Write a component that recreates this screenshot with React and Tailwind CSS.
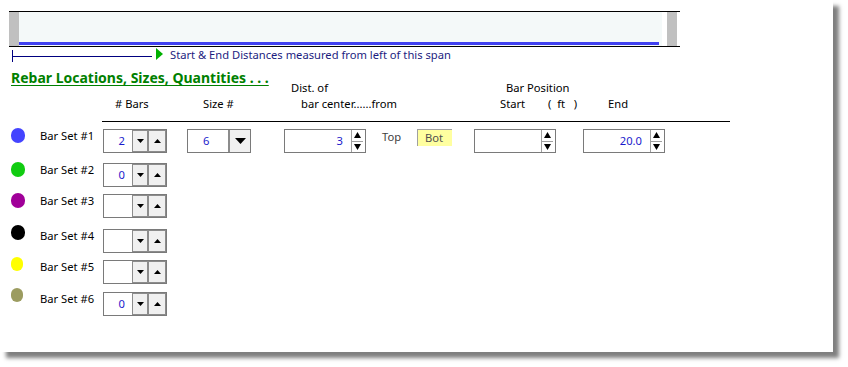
import React from "react";

function Tri({ dir = "down", w = 7, h = 4 }) {
  const pts = dir === "down" ? `0,0 ${w},0 ${w / 2},${h}` : `0,${h} ${w},${h} ${w / 2},0`;
  return (
    <svg width={w} height={h} viewBox={`0 0 ${w} ${h}`} className="block">
      <polygon points={pts} fill="#000" />
    </svg>
  );
}

function SpinH({ value }) {
  return (
    <div className="flex h-[24px] w-[64px] border border-[#7a7a7a] bg-white">
      <div className="flex-1 flex items-center justify-end pr-[7px] text-[#1a1acc]">{value}</div>
      <div className="w-[16px] border border-[#8c8c8c] bg-[#f0f0f0] flex items-center justify-center">
        <Tri dir="down" />
      </div>
      <div className="w-[18px] border border-[#8c8c8c] bg-[#f0f0f0] flex items-center justify-center">
        <Tri dir="up" />
      </div>
    </div>
  );
}

function SpinV({ value }) {
  return (
    <div className="flex h-[24px] w-[82px] border border-[#7a7a7a] bg-white">
      <div className="flex-1 flex items-center justify-end pr-[8px] text-[#1a1acc]">{value}</div>
      <div className="w-[12px] mr-[2px] flex flex-col border-l border-[#a0a0a0]">
        <div className="flex-1 flex items-center justify-center border-b border-[#a0a0a0]">
          <Tri dir="up" w={7} h={6} />
        </div>
        <div className="flex-1 flex items-center justify-center">
          <Tri dir="down" w={7} h={6} />
        </div>
      </div>
    </div>
  );
}

function SizeSelect({ value }) {
  return (
    <div className="flex h-[24px] w-[64px] border border-[#7a7a7a] bg-white">
      <div className="flex-1 flex items-center pl-[15px] text-[#1a1acc]">{value}</div>
      <div className="w-[22px] border-l-2 border-[#8c8c8c] bg-[#f0f0f0] flex items-center justify-center">
        <Tri dir="down" w={11} h={6} />
      </div>
    </div>
  );
}

const rows = [
  { n: 1, color: "bg-[#4444ff]", val: "2", mt: "mt-[7px]", cmt: "-mt-[1px]", csize: "w-[14px] h-[15px]", full: true },
  { n: 2, color: "bg-[#11cc11]", val: "0", mt: "mt-[10px]", cmt: "-mt-[1px]", csize: "w-[14px] h-[15px]" },
  { n: 3, color: "bg-[#a00099]", val: "", mt: "mt-[7px]", cmt: "-mt-[1px]", csize: "w-[14px] h-[15px]" },
  { n: 4, color: "bg-[#000000]", val: "", mt: "mt-[11px]", cmt: "-mt-[4px]", csize: "w-[14px] h-[15px]" },
  { n: 5, color: "bg-[#ffff00]", val: "", mt: "mt-[7px]", cmt: "-mt-[3px]", csize: "w-[12px] h-[14px]" },
  { n: 6, color: "bg-[#9c9c60]", val: "0", mt: "mt-[8px]", cmt: "-mt-[4px]", csize: "w-[12px] h-[14px]" },
];

export default function App() {
  return (
    <div className="w-[848px] h-[367px] bg-white font-['Noto_Sans',sans-serif] text-[11.2px] leading-[16px] text-black">
      <div className="w-[833px] h-[352px] bg-white shadow-[6px_6px_4px_rgba(0,0,0,0.5)] overflow-hidden">
        {/* top span panel */}
        <div className="pt-[11px] pl-[9px]">
          <div className="w-[671px] h-[36px] border-y border-black flex">
            <div className="w-[10px] bg-[#c0c0c0]" />
            <div className="w-[643px] bg-[#f4f9f9] flex flex-col justify-end">
              <div className="w-[640px] h-[3px] bg-[#4040f0] mb-px" />
            </div>
            <div className="w-[5px]" />
            <div className="w-[10px] bg-[#c0c0c0]" />
          </div>
        </div>

        {/* distance bracket */}
        <div className="mt-px h-[14px] flex items-start">
          <div className="ml-[12px] mt-[2px] w-px h-[12px] bg-[#000080]" />
          <div className="mt-[8px] w-[139px] h-px bg-[#000080]" />
          <div className="ml-[4px] w-0 h-0 border-l-[7px] border-l-[#00b000] border-y-[6px] border-y-transparent" />
          <div className="ml-[7px] -mt-[1px] text-[#1c1c80] whitespace-nowrap">
            Start &amp; End Distances measured from left of this span
          </div>
        </div>

        {/* title + header line 1 */}
        <div className="mt-[7px] flex items-start">
          <div className="ml-[11px] w-[280px]">
            <span className="text-[14px] leading-[18px] font-bold text-[#008000] underline underline-offset-[2px] whitespace-nowrap">
              Rebar Locations, Sizes, Quantities . . .
            </span>
          </div>
          <div className="mt-[11px] w-[215px] whitespace-nowrap">Dist. of</div>
          <div className="mt-[11px] whitespace-nowrap">Bar Position</div>
        </div>

        {/* header line 2 */}
        <div className="flex whitespace-nowrap">
          <div className="ml-[115px] w-[88px]"># Bars</div>
          <div className="w-[98px]">Size #</div>
          <div className="w-[199px]">bar center......from</div>
          <div className="w-[48px]">Start</div>
          <div className="w-[60px]">(&nbsp;&nbsp;ft&nbsp;&nbsp;&nbsp;)</div>
          <div>End</div>
        </div>

        <div className="mt-[9px] ml-[102px] w-[628px] h-px bg-black" />

        {/* rows */}
        {rows.map((r) => (
          <div key={r.n} className={`${r.mt} flex items-start`}>
            <div className={`ml-[11px] w-[29px] ${r.cmt}`}>
              <div className={`${r.csize} rounded-full ${r.color}`} />
            </div>
            <div className="w-[63px] -mt-px whitespace-nowrap">Bar Set #{r.n}</div>
            <SpinH value={r.val} />
            {r.full && (
              <>
                <div className="ml-[20px]">
                  <SizeSelect value="6" />
                </div>
                <div className="ml-[33px]">
                  <SpinV value="3" />
                </div>
                <div className="ml-[16px] w-[35px] text-[#404040]">Top</div>
                <div className="w-[35px] h-[17px] border-l border-t border-[#a0a0a0] bg-[#ffffa0] text-[#505050] pl-[7px] leading-[15px]">
                  Bot
                </div>
                <div className="ml-[22px]">
                  <SpinV value="" />
                </div>
                <div className="ml-[27px]">
                  <SpinV value="20.0" />
                </div>
              </>
            )}
          </div>
        ))}
      </div>
    </div>
  );
}
